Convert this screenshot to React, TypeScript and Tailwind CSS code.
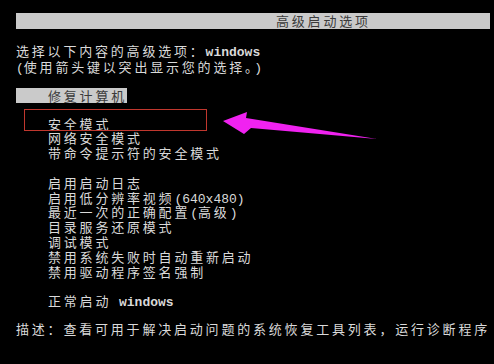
import React from 'react';

// Splits a line into ASCII runs (half width) and CJK runs (full width grid)
const BootText: React.FC<{ s: string }> = ({ s }) => (
    <>
        {s.split(/([\x20-\x7e]+)/).filter(Boolean).map((part, i) =>
            /^[\x20-\x7e]+$/.test(part) ? (
                <span
                    key={i}
                    className={`font-['Liberation_Mono',monospace] tracking-[0px] whitespace-pre ${part.includes('windows') ? 'font-bold' : ''}`}
                >
                    {part}
                </span>
            ) : (
                <span key={i} className="tracking-[2.8px]">{part}</span>
            )
        )}
    </>
);

const menuItems = [
    '安全模式',
    '网络安全模式',
    '带命令提示符的安全模式',
    '',
    '启用启动日志',
    '启用低分辨率视频(640x480)',
    '最近一次的正确配置(高级)',
    '目录服务还原模式',
    '调试模式',
    '禁用系统失败时自动重新启动',
    '禁用驱动程序签名强制',
    '',
    '正常启动 windows',
];

const App: React.FC = () => {
    return (
        <div className="relative w-[494px] h-[364px] overflow-hidden bg-black text-[13px] text-[#dadada] font-['Noto_Sans_CJK_SC',sans-serif] whitespace-nowrap">
            <div className="flex flex-col">
                {/* title bar */}
                <div className="mt-[13px] ml-[16px] w-[474px] h-[16px] bg-[#cacaca] text-[#3a3a3a] leading-[16px] pl-[260px]">
                    <BootText s="高级启动选项" />
                </div>

                <div className="mt-[14px] ml-[16px] leading-[16px]">
                    <div className="h-[16px]"><BootText s="选择以下内容的高级选项：windows" /></div>
                    <div className="h-[16px]"><BootText s="(使用箭头键以突出显示您的选择。)" /></div>
                </div>

                {/* highlighted entry */}
                <div className="mt-[13px] ml-[16px] w-fit h-[15px] leading-[15px] pl-[32px] bg-[#cacaca] text-[#3a3a3a]">
                    <BootText s="修复计算机" />
                </div>

                <div className="mt-[13.6px] ml-[48px] leading-[14.8px]">
                    {menuItems.map((item, i) => (
                        <div key={i} className="h-[14.8px]">
                            {item && <BootText s={item} />}
                        </div>
                    ))}
                </div>

                <div className="mt-[12.6px] ml-[16px] h-[14.8px] leading-[14.8px]">
                    <BootText s="描述：查看可用于解决启动问题的系统恢复工具列表，运行诊断程序" />
                </div>
            </div>

            {/* annotation overlay */}
            <div className="absolute left-[24px] top-[109px] w-[183px] h-[22px] border-[1.5px] border-[#c0372e]" />
            <svg className="absolute inset-0 pointer-events-none" width="494" height="364" viewBox="0 0 494 364">
                <polygon points="223,121 247,112 246,118 377,139 251,128 244,134" fill="#f022f0" />
            </svg>
        </div>
    );
};

export default App;
